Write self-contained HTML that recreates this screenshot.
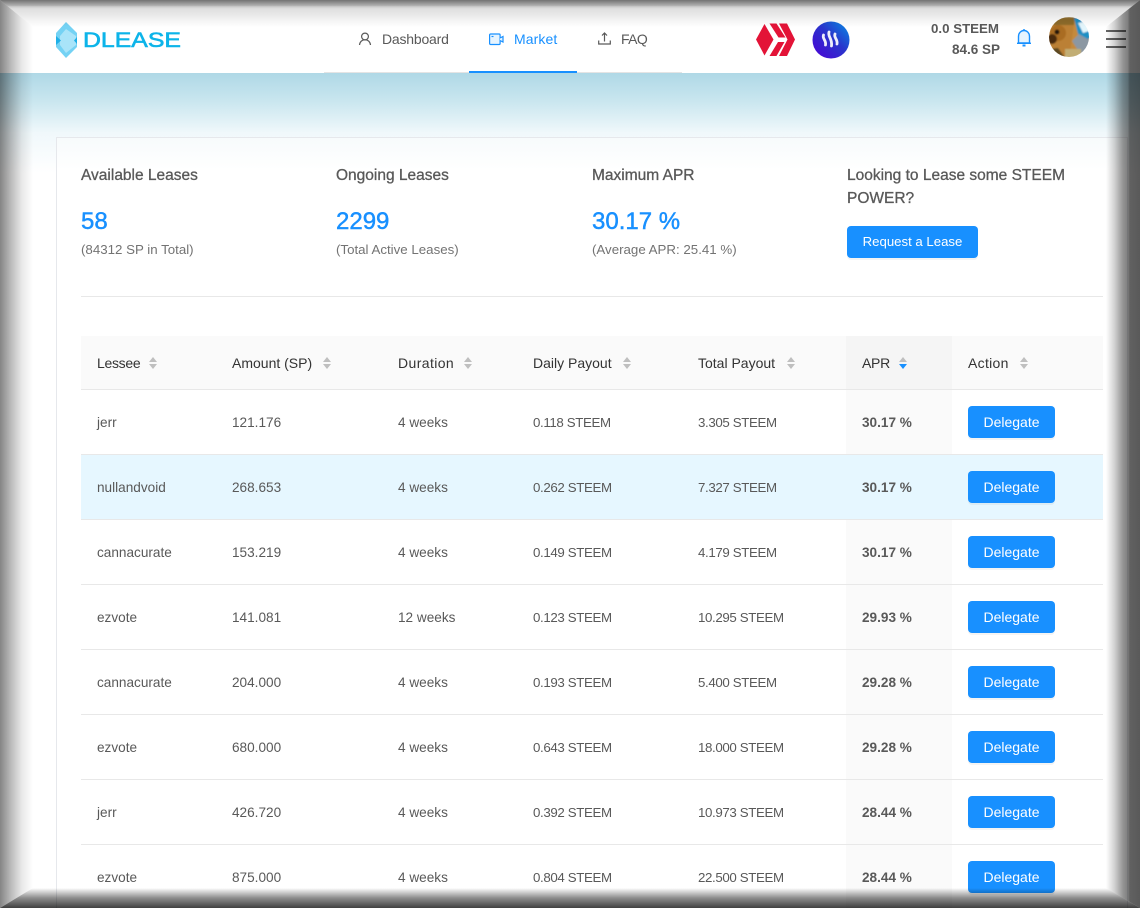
<!DOCTYPE html>
<html><head><meta charset="utf-8"><title>DLease Market</title>
<style>
html,body{margin:0;padding:0;width:1140px;height:908px;overflow:hidden}
body{background:#fff;font-family:"Liberation Sans",sans-serif;font-size:14px;color:#595959}
div,span,a{position:absolute;white-space:nowrap}
#wrap{left:0;top:0;width:1140px;height:908px;overflow:hidden;background:#fff}
.hdr{left:0;top:0;width:1140px;height:73px;background:#fff}
.grad{left:0;top:73px;width:1140px;height:100px;background:linear-gradient(#afd8e6,#c9e6ef 28%,#f0f8fb 60%,#fff)}
.card{left:56px;top:137px;width:1070px;height:800px;border:1px solid #e6e8ec;background:linear-gradient(#f7fbfc,#fff 32px)}
.nav{font-size:14px;top:29px;line-height:20px;color:#595959}
.ttl{font-size:15.5px;line-height:24px;color:#595959;top:164px;-webkit-text-stroke:.3px #595959}
.num{font-size:24px;line-height:32px;color:#1890ff;top:206px;-webkit-text-stroke:.45px #1890ff}
.sub{font-size:13.3px;line-height:20px;color:#737373;top:240px}
.btn{background:#1890ff;color:#fff;border-radius:4px;text-align:center;font-size:14px;box-shadow:0 2px 0 rgba(0,0,0,.045)}
.th{top:353px;line-height:20px;font-size:14px;color:#333}
.row{left:81px;width:1022px;height:64px;border-bottom:1px solid #e8e8e8}
.c{top:23px;line-height:20px;font-size:13.6px;color:#595959}
.p{font-size:13.3px;letter-spacing:-.37px}
.aprbg{left:765px;top:0;width:106px;height:64px;background:#fafafa}
.b{left:781px;font-weight:bold;color:#595959;font-size:13.6px}
.d{left:887px;top:16px;width:87px;height:32px;line-height:32px}
</style></head><body><div id="wrap">
<div class="hdr"></div>
<div class="grad"></div>
<div style="left:324px;top:72px;width:358px;height:1px;background:#e4e4e4"></div>
<div style="left:469px;top:71px;width:108px;height:2px;background:#1890ff"></div>

<svg style="position:absolute;left:54px;top:21px" width="132" height="38" viewBox="0 0 132 38">
<polygon points="12,1 23,12 23,26 12,37 2,26 2,12" fill="#74d2f4"/>
<polygon points="12,8 22,15 22,24 12,32 6,24 6,15" fill="#a9e4f9"/>
<polygon points="2,15 7,19.500 2,24" fill="#1fb0e8"/>
<polygon points="23,16 20,19.500 23,23" fill="#1fb0e8"/>
<text x="29" y="26" font-family="Liberation Sans" font-size="21" fill="#0db4e9" stroke="#0db4e9" stroke-width=".6" textLength="98" lengthAdjust="spacingAndGlyphs">DLEASE</text>
</svg>

<svg style="position:absolute;left:358px;top:32px" width="14" height="14" viewBox="0 0 14 14" fill="none" stroke="#595959" stroke-width="1.2"><circle cx="7" cy="4.500" r="3.400"/><path d="M1.500 13c.3-3.200 2.500-5.200 5.500-5.200s5.200 2 5.500 5.200"/></svg>
<a class="nav" style="left:382px;letter-spacing:-.2px">Dashboard</a>
<svg style="position:absolute;left:489px;top:33px" width="15" height="13" viewBox="0 0 15 13" fill="#e6f4ff" stroke="#1890ff" stroke-width="1.200"><rect x=".6" y="1" width="10.500" height="10.500" rx="1"/><path d="M11 5l3-1.500v5.500l-3-1.500"/><path d="M2.500 3.500h2"/></svg>
<a class="nav" style="left:514px;color:#1890ff;letter-spacing:.1px">Market</a>
<svg style="position:absolute;left:598px;top:32px" width="13" height="13" viewBox="0 0 13 13" fill="none" stroke="#595959" stroke-width="1.200"><path d="M.7 8.500v3.500h11.600v-3.500"/><path d="M6.500 9.500V1.500M4 3.500l2.500-2.500 2.500 2.500"/></svg>
<a class="nav" style="left:621px;letter-spacing:-.6px">FAQ</a>

<svg style="position:absolute;left:755px;top:22px" width="40" height="36" viewBox="0 0 40 36" fill="#e31337"><polygon points="1,17.500 9.500,2 18.500,17.500 9.500,33.500"/><polygon points="14.500,1.500 21.500,1.500 30.500,15.500 23.500,15.500"/><polygon points="24,1.500 32,1.500 40,17.500 32,34 24,34 32.500,17.500"/><polygon points="14.500,34 21.500,34 29.500,20 23,20"/></svg>

<svg style="position:absolute;left:812px;top:21px" width="38" height="38" viewBox="0 0 38 38"><defs><linearGradient id="st" x1="0" y1="1" x2="1" y2="0"><stop offset="0" stop-color="#4d00d6"/><stop offset=".55" stop-color="#2a35cc"/><stop offset="1" stop-color="#0690e6"/></linearGradient></defs><circle cx="19" cy="19" r="18.500" fill="url(#st)"/><g fill="none" stroke="#fff" stroke-width="2.800" stroke-linecap="round" opacity=".92"><path d="M11.500 14c-1.500 4 3 5 2 10"/><path d="M17 11c-1.500 5 3.500 6 2.500 14"/><path d="M23 13c-1.500 4 3 5 2 10"/></g></svg>

<div style="left:900px;width:99px;text-align:right;top:18px;line-height:21px;font-weight:bold;font-size:13.300px;color:#595959">0.0 STEEM</div>
<div style="left:900px;width:100px;text-align:right;top:39px;line-height:21px;font-weight:bold;font-size:13.500px;color:#595959">84.6 SP</div>

<svg style="position:absolute;left:1016px;top:28px" width="16" height="20" viewBox="0 0 16 20" fill="#e6f4ff" stroke="#1890ff" stroke-width="1.400"><path d="M2.500 15V8.500C2.500 5 5 2.500 8 2.500s5.500 2.500 5.500 6V15z"/><path d="M1 15.300h14"/><path d="M6.500 17.500h3" stroke-width="2"/><path d="M8 1v1.500"/></svg>

<svg style="position:absolute;left:1049px;top:17px" width="40" height="40" viewBox="0 0 40 40"><defs><clipPath id="av"><circle cx="20" cy="20" r="20"/></clipPath><filter id="bl" x="-10%" y="-10%" width="120%" height="120%"><feGaussianBlur stdDeviation=".7"/></filter></defs><g clip-path="url(#av)"><g filter="url(#bl)"><rect width="40" height="40" fill="#bb8034"/><rect width="26" height="8" fill="#8c6a2a"/><polygon points="26,0 42,0 42,42 20,42" fill="#c48a3c"/><polygon points="25,1 42,0 42,20 38,23 29,17" fill="#1e8fc4"/><polygon points="29,6 38,4 40,14 34,16" fill="#e3f5fb"/><polygon points="23,24 30,17 42,24 42,36 32,38" fill="#8b97a2"/><polygon points="0,32 9,31 17,42 0,42" fill="#5d4a22"/><ellipse cx="9" cy="16" rx="8" ry="8" fill="#a96c24"/><circle cx="8" cy="15" r="2.500" fill="#24150a"/><circle cx="3" cy="22" r="5" fill="#4a2c10"/><rect x="16" y="32" width="16" height="9" fill="#c2ae74"/></g></g></svg>

<div style="left:1106px;top:30px;width:20px;height:2px;background:#666"></div>
<div style="left:1106px;top:38px;width:20px;height:2px;background:#666"></div>
<div style="left:1106px;top:46px;width:20px;height:2px;background:#666"></div>

<div class="card"></div>

<div class="ttl" style="left:81px">Available Leases</div>
<div class="num" style="left:81px">58</div>
<div class="sub" style="left:81px">(84312 SP in Total)</div>
<div class="ttl" style="left:336px">Ongoing Leases</div>
<div class="num" style="left:336px">2299</div>
<div class="sub" style="left:336px">(Total Active Leases)</div>
<div class="ttl" style="left:592px">Maximum APR</div>
<div class="num" style="left:592px">30.17 %</div>
<div class="sub" style="left:592px">(Average APR: 25.41 %)</div>
<div class="ttl" style="left:847px">Looking to Lease some STEEM</div>
<div class="ttl" style="left:847px;top:187px">POWER?</div>
<div class="btn" style="left:847px;top:226px;width:131px;height:32px;line-height:32px;font-size:13.200px">Request a Lease</div>
<div style="left:81px;top:296px;width:1022px;height:1px;background:#e8e8e8"></div>

<div style="left:81px;top:336px;width:1022px;height:53px;background:#fafafa;border-bottom:1px solid #e8e8e8"></div>
<div style="left:846px;top:336px;width:106px;height:53px;background:#f5f5f5"></div>
<div class="th" style="left:97px;letter-spacing:-.3px">Lessee</div>
<div class="th" style="left:232px">Amount (SP)</div>
<div class="th" style="left:398px;letter-spacing:.4px">Duration</div>
<div class="th" style="left:533px">Daily Payout</div>
<div class="th" style="left:698px">Total Payout</div>
<div class="th" style="left:862px;letter-spacing:-.3px">APR</div>
<div class="th" style="left:968px;letter-spacing:.3px">Action</div>
<svg style="position:absolute;left:0;top:0" width="1140" height="908">
<g fill="#bfbfbf">
<path d="M149 362l4-5 4 5zM149 364l4 5 4-5z"/>
<path d="M323 362l4-5 4 5zM323 364l4 5 4-5z"/>
<path d="M464 362l4-5 4 5zM464 364l4 5 4-5z"/>
<path d="M623 362l4-5 4 5zM623 364l4 5 4-5z"/>
<path d="M787 362l4-5 4 5zM787 364l4 5 4-5z"/>
<path d="M899 362l4-5 4 5z"/>
<path d="M1020 362l4-5 4 5zM1020 364l4 5 4-5z"/>
</g>
<path d="M899 364l4 5 4-5z" fill="#1890ff"/>
</svg>

<div class="row" style="top:390px"><div class="aprbg"></div><span class="c" style="left:16px">jerr</span><span class="c" style="left:151px">121.176</span><span class="c" style="left:317px">4 weeks</span><span class="c p" style="left:452px">0.118 STEEM</span><span class="c p" style="left:617px">3.305 STEEM</span><span class="c b">30.17 %</span><div class="btn d">Delegate</div></div>
<div class="row" style="top:455px;background:#e6f7ff"><div class="aprbg" style="background:#e6f7ff"></div><span class="c" style="left:16px">nullandvoid</span><span class="c" style="left:151px">268.653</span><span class="c" style="left:317px">4 weeks</span><span class="c p" style="left:452px">0.262 STEEM</span><span class="c p" style="left:617px">7.327 STEEM</span><span class="c b">30.17 %</span><div class="btn d">Delegate</div></div>
<div class="row" style="top:520px"><div class="aprbg"></div><span class="c" style="left:16px">cannacurate</span><span class="c" style="left:151px">153.219</span><span class="c" style="left:317px">4 weeks</span><span class="c p" style="left:452px">0.149 STEEM</span><span class="c p" style="left:617px">4.179 STEEM</span><span class="c b">30.17 %</span><div class="btn d">Delegate</div></div>
<div class="row" style="top:585px"><div class="aprbg"></div><span class="c" style="left:16px">ezvote</span><span class="c" style="left:151px">141.081</span><span class="c" style="left:317px">12 weeks</span><span class="c p" style="left:452px">0.123 STEEM</span><span class="c p" style="left:617px">10.295 STEEM</span><span class="c b">29.93 %</span><div class="btn d">Delegate</div></div>
<div class="row" style="top:650px"><div class="aprbg"></div><span class="c" style="left:16px">cannacurate</span><span class="c" style="left:151px">204.000</span><span class="c" style="left:317px">4 weeks</span><span class="c p" style="left:452px">0.193 STEEM</span><span class="c p" style="left:617px">5.400 STEEM</span><span class="c b">29.28 %</span><div class="btn d">Delegate</div></div>
<div class="row" style="top:715px"><div class="aprbg"></div><span class="c" style="left:16px">ezvote</span><span class="c" style="left:151px">680.000</span><span class="c" style="left:317px">4 weeks</span><span class="c p" style="left:452px">0.643 STEEM</span><span class="c p" style="left:617px">18.000 STEEM</span><span class="c b">29.28 %</span><div class="btn d">Delegate</div></div>
<div class="row" style="top:780px"><div class="aprbg"></div><span class="c" style="left:16px">jerr</span><span class="c" style="left:151px">426.720</span><span class="c" style="left:317px">4 weeks</span><span class="c p" style="left:452px">0.392 STEEM</span><span class="c p" style="left:617px">10.973 STEEM</span><span class="c b">28.44 %</span><div class="btn d">Delegate</div></div>
<div class="row" style="top:845px"><div class="aprbg"></div><span class="c" style="left:16px">ezvote</span><span class="c" style="left:151px">875.000</span><span class="c" style="left:317px">4 weeks</span><span class="c p" style="left:452px">0.804 STEEM</span><span class="c p" style="left:617px">22.500 STEEM</span><span class="c b">28.44 %</span><div class="btn d">Delegate</div></div>

<svg style="position:absolute;left:0;top:0" width="1140" height="908" viewBox="0 0 1140 908">
<defs>
<linearGradient id="gt" x1="0" y1="0" x2="0" y2="1"><stop offset="0" stop-color="#000" stop-opacity=".55"/><stop offset=".2" stop-color="#000" stop-opacity=".32"/><stop offset=".25" stop-color="#000" stop-opacity=".2"/><stop offset=".32" stop-color="#000" stop-opacity=".13"/><stop offset="1" stop-color="#000" stop-opacity="0"/></linearGradient>
<linearGradient id="gl" x1="0" y1="0" x2="1" y2="0"><stop offset="0" stop-color="#000" stop-opacity=".48"/><stop offset=".33" stop-color="#000" stop-opacity=".27"/><stop offset=".66" stop-color="#000" stop-opacity=".09"/><stop offset="1" stop-color="#000" stop-opacity="0"/></linearGradient>
<linearGradient id="gr" x1="1" y1="0" x2="0" y2="0"><stop offset="0" stop-color="#000" stop-opacity=".65"/><stop offset=".3" stop-color="#000" stop-opacity=".62"/><stop offset=".36" stop-color="#000" stop-opacity=".5"/><stop offset=".5" stop-color="#000" stop-opacity=".42"/><stop offset=".75" stop-color="#000" stop-opacity=".18"/><stop offset="1" stop-color="#000" stop-opacity="0"/></linearGradient>
<linearGradient id="gb" x1="0" y1="1" x2="0" y2="0"><stop offset="0" stop-color="#000" stop-opacity=".75"/><stop offset=".5" stop-color="#000" stop-opacity=".45"/><stop offset="1" stop-color="#000" stop-opacity="0"/></linearGradient>
</defs>
<polygon points="0,0 1140,0 1106,27 33,27" fill="url(#gt)"/>
<polygon points="0,0 33,27 33,888 0,908" fill="url(#gl)"/>
<polygon points="1140,0 1106,27 1106,888 1140,908" fill="url(#gr)"/>
<polygon points="0,908 33,888 1106,888 1140,908" fill="url(#gb)"/>
</svg>
</div></body></html>
